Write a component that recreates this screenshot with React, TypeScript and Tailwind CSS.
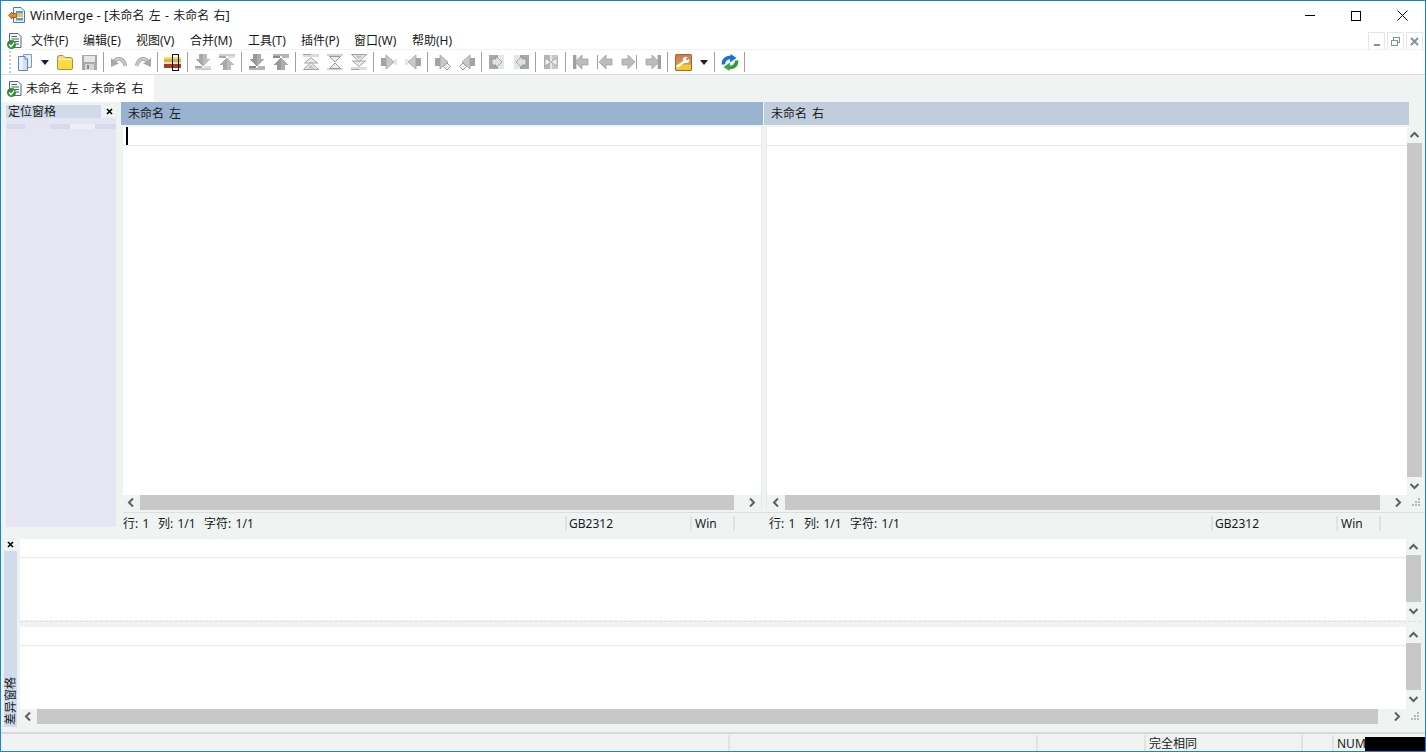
import React from "react";

const S = ({ w = 16, h = 16, vb, children }: { w?: number; h?: number; vb?: string; children: React.ReactNode }) => (
  <svg width={w} height={h} viewBox={vb ?? `0 0 ${w} ${h}`} shapeRendering="crispEdges" className="block shrink-0">
    {children}
  </svg>
);

const MX = "translate(16,0) scale(-1,1)";
const MY = "translate(0,16) scale(1,-1)";

const ArrowDownBar = ({ dark, flip }: { dark?: boolean; flip?: boolean }) => (
  <S>
    <g transform={flip ? MY : undefined}>
      <polygon points="4,0 12,0 12,5 16,5 8,12 0,5 4,5" fill={dark ? "#acacac" : "#bcbcbc"} />
      <polygon points="4,0 8,0 8,12 0,5 4,5" fill={dark ? "#989898" : "#a8a8a8"} />
      <rect x="0" y="12" width="7" height="2" fill={dark ? "#8a8a8a" : "#a8a8a8"} />
      <rect x="9" y="12" width="7" height="2" fill={dark ? "#b4b4b4" : "#e0e0e0"} />
      <rect x="0" y="14" width="16" height="2" fill={dark ? "#b4b4b4" : "#cfcfcf"} />
    </g>
  </S>
);

const Chevrons = ({ kind }: { kind: "up" | "mid" | "down" }) => (
  <S>
    {kind !== "mid" && (
      <g transform={kind === "down" ? MY : undefined}>
        <rect x="0" y="0" width="16" height="3" fill="#dcdcdc" />
        <rect x="0" y="0" width="8" height="1" fill="#a0a0a0" />
        <g fill="#ececec" stroke="#a0a0a0" strokeWidth="1" shapeRendering="auto">
          <polygon points="8,3.5 14.5,9 1.5,9" />
          <polygon points="8,8.5 15.5,15.5 .5,15.5" />
        </g>
        <polygon points="8,11 12,14.5 4,14.5" fill="#c4c4c4" shapeRendering="auto" />
      </g>
    )}
    {kind === "mid" && (
      <g>
        <rect x="0" y="0" width="16" height="2" fill="#d4d4d4" />
        <rect x="0" y="14" width="16" height="2" fill="#d4d4d4" />
        <g fill="#ededed" stroke="#9a9a9a" strokeWidth="1" shapeRendering="auto">
          <polygon points="2.5,2.5 13.5,2.5 8,8" />
          <polygon points="2.5,14.5 13.5,14.5 8,9" />
        </g>
      </g>
    )}
  </S>
);

const SideArrow = ({ flip, diamond }: { flip?: boolean; diamond?: boolean }) => (
  <S>
    <g transform={flip ? MX : undefined}>
      <rect x="0" y="4" width="5" height="8" fill="#a4a4a4" />
      <polygon points="5,1 5,15 13,8" fill="#c8c8c8" stroke="#a0a0a0" strokeWidth="0.8" shapeRendering="auto" />
      {!diamond && <rect x="13" y="5" width="3" height="6" fill="#e6e6e6" />}
      {diamond && <polygon points="12,9 15.5,12.5 12,16 8.5,12.5" fill="#f2f2f2" stroke="#9a9a9a" shapeRendering="auto" />}
    </g>
  </S>
);

const BoxArrow = ({ flip }: { flip?: boolean }) => (
  <S>
    <g transform={flip ? MX : undefined}>
      <rect x="0" y="1" width="9" height="14" fill="#a8a8a8" />
      <rect x="9" y="1" width="6" height="14" fill="#e2e8e6" />
      <polygon points="3,5 7,5 7,2 13,8 7,14 7,11 3,11" fill="#e0e0e0" stroke="#8e8e8e" strokeWidth="0.7" shapeRendering="auto" />
    </g>
  </S>
);

const XBox = () => (
  <S>
    <rect x="1" y="1" width="6" height="14" fill="#b4b4b4" />
    <rect x="9" y="1" width="6" height="14" fill="#c8c8c8" />
    <rect x="7" y="1" width="2" height="14" fill="#e4e8e6" />
    <g fill="#f2f2f2" stroke="#9a9a9a" strokeWidth="0.7" shapeRendering="auto">
      <polygon points="2,4 8,8 2,12" />
      <polygon points="14,4 8,8 14,12" />
    </g>
  </S>
);

const NavArrow = ({ flip, thin }: { flip?: boolean; thin?: boolean }) => (
  <S>
    <g transform={flip ? MX : undefined}>
      <rect x="0" y="1" width={thin ? 1 : 3} height="14" fill="#a0a0a0" />
      {!thin && <rect x="3" y="1" width="1" height="14" fill="#d8d8d8" />}
      <polygon points="2,8 9,1 9,5 15,5 15,11 9,11 9,15" fill="#bcbcbc" stroke="#9c9c9c" strokeWidth="0.7" shapeRendering="auto" />
    </g>
  </S>
);

const NewDoc = () => (
  <S w={16} h={17}>
    <g shapeRendering="auto">
      <path d="M6.5 .5H14.5V13.5H6.5Z" fill="#e6eefa" stroke="#7f9cc0" />
      <path d="M1.5 2.5H8L10.5 5V16.5H1.5Z" fill="#cfe0f4" stroke="#5f86b8" />
      <path d="M8 2.5V5H10.5" fill="#fff" stroke="#5f86b8" />
      <path d="M2 3H6V16H2Z" fill="#eaf2fc" />
    </g>
  </S>
);

const Folder = () => (
  <S w={18} h={17}>
    <g shapeRendering="auto">
      <path d="M1.5 3.5Q1.5 1.5 3.5 1.5H7L9 3.5H14.5Q16.5 3.5 16.5 5.5V14Q16.5 15.5 15 15.5H3Q1.5 15.5 1.5 14Z" fill="#f3dc8c" stroke="#b98b2e" />
      <rect x="2.5" y="6" width="13" height="8.8" fill="#f7dc3c" />
      <rect x="2.5" y="5" width="13" height="1" fill="#fff3bd" />
    </g>
  </S>
);

const Save = () => (
  <S w={15} h={15}>
    <rect x="0" y="0" width="15" height="15" fill="#a8a8a8" />
    <rect x="2" y="1" width="11" height="6" fill="#e6e6e6" />
    <rect x="3" y="9" width="9" height="6" fill="#d4d4d4" />
    <rect x="5" y="10" width="2" height="4" fill="#8c8c8c" />
  </S>
);

const Undo = ({ flip }: { flip?: boolean }) => (
  <S>
    <g transform={flip ? MX : undefined} shapeRendering="auto">
      <path d="M3 9C5 3 12 3 14.5 12" fill="none" stroke="#a8a8a8" strokeWidth="3.6" />
      <path d="M3 9C5 3 12 3 14.5 12" fill="none" stroke="#d4d4d4" strokeWidth="1.4" />
      <polygon points="0,4 8,9.5 0,13" fill="#a8a8a8" />
    </g>
  </S>
);

const Options = () => (
  <S w={18} h={17}>
    <rect x="0" y="3" width="17" height="2" fill="#e8e27a" />
    <rect x="0" y="5" width="17" height="3" fill="#e2b62a" />
    <rect x="0" y="8" width="17" height="2" fill="#dddddd" />
    <rect x="0" y="10" width="17" height="4" fill="#a83a22" />
    <rect x="8.5" y="0.5" width="6" height="16" fill="none" stroke="#111" />
  </S>
);

const Wrench = () => (
  <svg width="17" height="17" viewBox="0 0 16 16" className="block">
    <defs>
      <linearGradient id="wr" x1="0" y1="0" x2="0" y2="1">
        <stop offset="0" stopColor="#c27a58" />
        <stop offset="0.6" stopColor="#dc9a58" />
        <stop offset="0.68" stopColor="#f4cf2a" />
        <stop offset="1" stopColor="#f2c428" />
      </linearGradient>
    </defs>
    <rect x="0.5" y="0.5" width="15" height="15" rx="1" fill="url(#wr)" stroke="#a9682c" />
    <path d="M2.5 11.5L9 7" stroke="#fff" strokeWidth="2.2" strokeLinecap="round" />
    <circle cx="10.5" cy="5.5" r="3" fill="#fff" />
    <path d="M10.8 5.2L14.5 2.2" stroke="#c98a5c" strokeWidth="2.2" />
  </svg>
);

const Refresh = () => (
  <svg width="18" height="17" viewBox="0 0 18 17" className="block">
    <path d="M2.5 10.5C2 5.5 6 2.5 11 4" fill="none" stroke="#1f6fd0" strokeWidth="3.6" />
    <polygon points="9.5,0 15.5,4 9,8.5" fill="#1f6fd0" />
    <path d="M15.5 6.5C16 11.5 12 14.5 7 13" fill="none" stroke="#2f9f2f" strokeWidth="3.6" />
    <polygon points="8.5,17 2.5,13 9,8.5" fill="#3aa83a" />
    <path d="M4 9L8 5.5M10 11.5L14 8" stroke="#a8d8f4" strokeWidth="1" />
  </svg>
);

const DocCheck = () => (
  <svg width="15" height="16" viewBox="0 0 15 16" className="block shrink-0">
    <path d="M2.5 .5H11L14 3.5V14.5H2.5Z" fill="#f4f4fb" stroke="#5a5aa6" />
    <path d="M4.5 3.5H10M4.5 6H12M7 8.5H12M9 11H12" stroke="#3a7a4a" strokeWidth="1" />
    <circle cx="4.5" cy="11.5" r="4.5" fill="#2f8f2f" />
    <path d="M2.2 11.5L4 13.6L7.2 9.6" fill="none" stroke="#fff" strokeWidth="1.5" />
  </svg>
);

const AppIcon = () => (
  <svg width="17" height="16" viewBox="0 0 17 16" className="block shrink-0">
    <path d="M5.5 .5H13L16.5 4V15.5H5.5Z" fill="#eef4fb" stroke="#4f78a8" />
    <rect x="8" y="4" width="7" height="2.5" fill="#5b9bd5" />
    <rect x="9" y="7" width="6" height="3" fill="#f2c230" />
    <rect x="8" y="11" width="7" height="2.5" fill="#5b9bd5" />
    <polygon points=".5,8.5 4,5 4,6.5 8.5,6.5 8.5,10.5 4,10.5 4,12" fill="#e8892a" stroke="#8a4210" strokeWidth="0.7" />
  </svg>
);

const Caret = () => (
  <svg width="8" height="5" viewBox="0 0 8 5" className="block">
    <polygon points="0,0 8,0 4,5" fill="#1c1c34" />
  </svg>
);

const Chev = ({ dir }: { dir: "up" | "down" | "left" | "right" }) => {
  const pts = {
    up: "1.5,7 5.5,3 9.5,7",
    down: "1.5,3 5.5,7 9.5,3",
    left: "7,1.5 3,5.5 7,9.5",
    right: "3,1.5 7,5.5 3,9.5",
  }[dir];
  return (
    <svg width="11" height="11" viewBox="0 0 11 11" className="block">
      <polyline points={pts} fill="none" stroke="#606060" strokeWidth="2" />
    </svg>
  );
};

const Grip = () => (
  <svg width="12" height="12" viewBox="0 0 12 12" className="block" shapeRendering="crispEdges">
    {[[8, 1], [5, 4], [8, 4], [2, 7], [5, 7], [8, 7]].map(([x, y]) => (
      <rect key={`${x}-${y}`} x={x} y={y} width="2" height="2" fill="#b4b8b6" />
    ))}
  </svg>
);

const Btn = ({ w = "w-[24px]", children }: { w?: string; children: React.ReactNode }) => (
  <div className={`${w} h-[24px] flex items-center justify-center shrink-0`}>{children}</div>
);

const Sep = () => <div className="w-px h-[20px] bg-[#a0a0a0] ml-[2px] mr-[3px] shrink-0" />;

const Toolbar = () => (
  <div className="h-[24px] flex items-center bg-white border-b-0">
    <div className="w-[12px] h-full flex flex-col items-center justify-center gap-[2px] pl-[6px] shrink-0">
      {[0, 1, 2, 3, 4, 5].map((i) => (
        <div key={i} className="w-[2px] h-[2px] bg-[#c8c8c8]" />
      ))}
    </div>
    <Btn><NewDoc /></Btn>
    <Btn w="w-[16px]"><Caret /></Btn>
    <Btn><Folder /></Btn>
    <Btn><Save /></Btn>
    <Sep />
    <Btn><Undo /></Btn>
    <Btn><Undo flip /></Btn>
    <Sep />
    <Btn><Options /></Btn>
    <Sep />
    <Btn><ArrowDownBar /></Btn>
    <Btn><ArrowDownBar flip /></Btn>
    <Sep />
    <Btn><ArrowDownBar dark /></Btn>
    <Btn><ArrowDownBar dark flip /></Btn>
    <Sep />
    <Btn><Chevrons kind="up" /></Btn>
    <Btn><Chevrons kind="mid" /></Btn>
    <Btn><Chevrons kind="down" /></Btn>
    <Sep />
    <Btn><SideArrow /></Btn>
    <Btn><SideArrow flip /></Btn>
    <Sep />
    <Btn><SideArrow diamond /></Btn>
    <Btn><SideArrow diamond flip /></Btn>
    <Sep />
    <Btn><BoxArrow /></Btn>
    <Btn><BoxArrow flip /></Btn>
    <Sep />
    <Btn><XBox /></Btn>
    <Sep />
    <Btn><NavArrow /></Btn>
    <Btn><NavArrow thin /></Btn>
    <Btn><NavArrow thin flip /></Btn>
    <Btn><NavArrow flip /></Btn>
    <Sep />
    <Btn><Wrench /></Btn>
    <Btn w="w-[17px]"><Caret /></Btn>
    <Sep />
    <Btn><Refresh /></Btn>
    <Sep />
  </div>
);

const MENUS: [string, string][] = [
  ["文件(F)", "w-[52px]"],
  ["编辑(E)", "w-[53px]"],
  ["视图(V)", "w-[54px]"],
  ["合并(M)", "w-[58px]"],
  ["工具(T)", "w-[53px]"],
  ["插件(P)", "w-[53px]"],
  ["窗口(W)", "w-[58px]"],
  ["帮助(H)", "w-[50px]"],
];

const HScroll = ({ left, right }: { left: string; right: string }) => (
  <div className="h-[15px] flex bg-[#eff4f2] shrink-0">
    <div className={`${left} flex items-center justify-center shrink-0`}><Chev dir="left" /></div>
    <div className="flex-1 bg-[#c8c8c8]" />
    <div className={`${right} flex items-center justify-end pr-[3px] shrink-0`}><Chev dir="right" /></div>
  </div>
);

const VScroll = ({ thumb, gap, grip }: { thumb: string; gap: string; grip?: boolean }) => (
  <div className="w-[15px] flex flex-col bg-[#eff4f2] shrink-0">
    <div className="h-[16px] flex items-center justify-center shrink-0"><Chev dir="up" /></div>
    <div className={`${thumb} bg-[#c8c8c8] shrink-0`} />
    <div className={`${gap} flex items-center justify-center shrink-0`}><Chev dir="down" /></div>
    {grip && <div className="h-[15px] flex items-center justify-center shrink-0 pl-[2px]"><Grip /></div>}
  </div>
);

const EditHead = ({ caret }: { caret?: boolean }) => (
  <div className="h-[19px] border-b border-[#e8e8e8] shrink-0 bg-white">
    {caret && <div className="ml-[3px] w-[2px] h-[18px] bg-black" />}
  </div>
);

const FilePane = ({ caret, left, width }: { caret?: boolean; left: string; width: string }) => (
  <div className={`${width} flex flex-col shrink-0`}>
    <div className="flex-1 bg-white">
      <EditHead caret={caret} />
    </div>
    <HScroll left={left} right="w-[27px]" />
  </div>
);

const Cell = ({ w, pl, children }: { w: string; pl: string; children?: React.ReactNode }) => (
  <div className={`${w} ${pl} h-[15px] border-l-2 border-[#dfe3e1] leading-[15px] shrink-0`}>{children}</div>
);

const FileStatus = () => (
  <div className="w-[646px] flex items-center h-[17px] shrink-0">
    <div className="w-[444px] shrink-0 pl-[2px] whitespace-pre leading-[15px] [word-spacing:1.15px]">行: 1  列: 1/1  字符: 1/1</div>
    <Cell w="w-[125px]" pl="pl-[2px]">GB2312</Cell>
    <Cell w="w-[43px]" pl="pl-[3px]">Win</Cell>
    <Cell w="w-[31px]" pl="pl-0" />
  </div>
);

export default function App() {
  return (
    <div className="relative w-[1426px] h-[752px] overflow-hidden border border-[#1883d7] bg-[#eff4f2] flex flex-col text-[12px] leading-[16px] text-[#1a1a1a] [font-family:'Noto_Sans','Noto_Sans_CJK_SC',sans-serif]">
      {/* Title bar */}
      <div className="h-[29px] bg-white flex items-center shrink-0">
        <div className="ml-[7px] mr-[5px] -mt-[1px]"><AppIcon /></div>
        <div className="flex-1 text-[13px] whitespace-pre -mt-[1px]">
          WinMerge - [<span className="text-[12px] [word-spacing:1.2px]">未命名 左 - 未命名 右</span>]
        </div>
        <div className="w-[46px] flex justify-center">
          <div className="w-[10px] h-px bg-black" />
        </div>
        <div className="w-[46px] flex justify-center">
          <div className="w-[10px] h-[10px] border border-black" />
        </div>
        <div className="w-[46px] flex justify-center">
          <svg width="11" height="11" viewBox="0 0 11 11" className="block">
            <path d="M.5 .5L10.5 10.5M10.5 .5L.5 10.5" stroke="#000" strokeWidth="1" />
          </svg>
        </div>
      </div>

      {/* Menu bar */}
      <div className="h-[19px] bg-white flex items-center shrink-0">
        <div className="ml-[6px] w-[23px] shrink-0 mt-[2px]"><DocCheck /></div>
        <div className="ml-[1px] flex-1 flex items-center pt-[2px]">
          {MENUS.map(([t, w]) => (
            <div key={t} className={`${w} shrink-0 whitespace-nowrap`}>{t}</div>
          ))}
        </div>
        <div className="flex gap-[2px] pr-[2px] mt-[2px] h-[18px] -mb-[1px]">
          <div className="w-[17px] h-[18px] border border-[#e6e6e6] flex items-end justify-center pb-[3px]">
            <div className="w-[6px] h-[2px] bg-[#7f93a6]" />
          </div>
          <div className="w-[17px] h-[18px] border border-[#e6e6e6] flex items-center justify-center">
            <svg width="9" height="9" viewBox="0 0 9 9" className="block" shapeRendering="crispEdges">
              <path d="M2.5 2.5V.5H8.5V5.5H6.5M.5 3.5H6.5V8.5H.5Z" fill="none" stroke="#7f93a6" />
            </svg>
          </div>
          <div className="w-[17px] h-[18px] border border-[#e6e6e6] flex items-center justify-center">
            <svg width="9" height="9" viewBox="0 0 9 9" className="block">
              <path d="M1 1L8 8M8 1L1 8" stroke="#7f93a6" strokeWidth="2" />
            </svg>
          </div>
        </div>
      </div>
      <div className="h-px bg-[#eff4f2] shrink-0" />

      <div className="shrink-0"><Toolbar /></div>
      <div className="h-px bg-[#d8d8d8] shrink-0" />

      {/* Tabs */}
      <div className="h-[27px] flex shrink-0">
        <div className="w-[153px] bg-white flex items-center pl-[6px] gap-[4px]">
          <DocCheck />
          <span className="whitespace-pre [word-spacing:1.3px]">未命名 左 - 未命名 右</span>
        </div>
      </div>

      {/* Upper area */}
      <div className="h-[430px] flex shrink-0">
        {/* Location pane */}
        <div className="ml-[5px] w-[110px] h-[425px] bg-[#e6e6f2] flex flex-col shrink-0">
          <div className="h-[16px] flex items-end shrink-0 bg-[#eff4f2]">
            <div className="w-[95px] h-[13px] bg-[#d0dae8] leading-[13px] pl-[2px] whitespace-nowrap">定位窗格</div>
            <div className="flex-1 h-[13px] flex items-center justify-center pl-[1px]">
              <svg width="7" height="7" viewBox="0 0 7 7" className="block">
                <path d="M1 1L6 6M6 1L1 6" stroke="#000" strokeWidth="1.6" />
              </svg>
            </div>
          </div>
          <div className="h-[5px] mt-[6px] ml-[1px] flex shrink-0 bg-[#d8d8ee]">
            <div className="w-[25px] ml-[18px] bg-[#e4e4f2]" />
            <div className="w-[25px] ml-[20px] bg-[#eeeef8]" />
          </div>
        </div>

        {/* File panes */}
        <div className="ml-[5px] flex-1 flex flex-col min-w-0">
          <div className="h-[23px] flex shrink-0">
            <div className="w-[642px] bg-[#98b2d0] pl-[7px] leading-[24px] whitespace-pre [word-spacing:2px]">未命名 左</div>
            <div className="w-px" />
            <div className="w-[645px] bg-[#bfcddc] pl-[7px] leading-[24px] whitespace-pre [word-spacing:2px]">未命名 右</div>
          </div>
          <div className="h-[383px] mt-[2px] flex shrink-0">
            <div className="w-[2px] shrink-0" />
            <FilePane caret left="w-[17px]" width="w-[638px]" />
            <div className="w-[6px] shrink-0 border-x border-[#e6ebe9]" />
            <FilePane left="w-[18px]" width="w-[640px]" />
            <VScroll thumb="h-[334px]" gap="h-[18px]" grip />
          </div>
          <div className="h-[5px] shrink-0 pt-[2px] pl-[2px]">
            <div className="h-px bg-[#dcdfde]" />
          </div>
          <div className="flex shrink-0">
            <FileStatus />
            <FileStatus />
          </div>
        </div>
      </div>

      {/* Bottom area */}
      <div className="h-[200px] flex shrink-0 pt-[6px]">
        <div className="w-[19px] flex flex-col shrink-0">
          <div className="h-[13px] flex items-center pl-[6px] shrink-0">
            <svg width="7" height="7" viewBox="0 0 7 7" className="block">
              <path d="M1 1L6 6M6 1L1 6" stroke="#000" strokeWidth="1.6" />
            </svg>
          </div>
          <div className="ml-[3px] w-[13px] h-[176px] bg-[#d0dcec] flex flex-col justify-end items-center pb-[2px]">
            <div className="[writing-mode:vertical-rl] [text-orientation:sideways] rotate-180 leading-[13px] whitespace-nowrap">差异窗格</div>
          </div>
        </div>
        <div className="w-[1401px] flex flex-col shrink-0 pt-px">
          <div className="h-[81px] flex shrink-0">
            <div className="flex-1 bg-white"><EditHead /></div>
            <VScroll thumb="h-[47px]" gap="h-[18px]" />
          </div>
          <div className="h-[7px] shrink-0 pt-[1px]">
            <div className="h-px border-t border-dashed border-[#dce2e0]" />
          </div>
          <div className="h-[97px] flex flex-col shrink-0">
            <div className="h-[82px] flex shrink-0">
              <div className="flex-1 bg-white"><EditHead /></div>
              <VScroll thumb="h-[47px]" gap="h-[19px]" />
            </div>
            <div className="flex shrink-0">
              <div className="flex-1 min-w-0"><HScroll left="w-[17px]" right="w-[28px]" /></div>
              <div className="w-[15px] h-[15px] flex items-center justify-center shrink-0 pl-[2px]"><Grip /></div>
            </div>
          </div>
        </div>
      </div>

      {/* Status bar */}
      <div className="flex-1 border-t-2 border-[#d8d8d8] flex items-center min-h-0">
        <div className="w-[727px] shrink-0" />
        <div className="w-[308px] h-[16px] border-l-2 border-[#dfe3e1] shrink-0" />
        <div className="w-[108px] h-[16px] border-l-2 border-[#dfe3e1] shrink-0" />
        <div className="w-[157px] h-[16px] border-l-2 border-[#dfe3e1] pl-[3px] leading-[18px] shrink-0 whitespace-nowrap">完全相同</div>
        <div className="w-[31px] h-[16px] border-l-2 border-[#dfe3e1] shrink-0" />
        <div className="flex-1 h-[16px] border-l-2 border-[#dfe3e1] pl-[3px] leading-[18px] whitespace-nowrap">NUM</div>
      </div>

      {/* Black capture artefact over the corner */}
      <div className="absolute right-[-1px] bottom-[-1px] w-[61px] h-[15px] bg-black" />
    </div>
  );
}
